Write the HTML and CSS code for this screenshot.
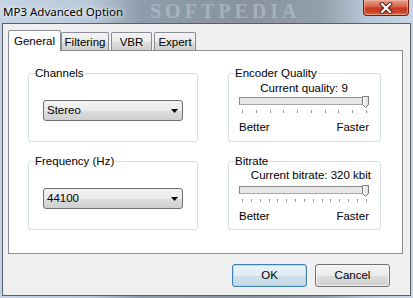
FILE: index.html
```html
<!DOCTYPE html>
<html>
<head>
<meta charset="utf-8">
<link rel="stylesheet" href="styles.css">
</head>
<body>
<div class="titlebar">
  <span class="title">MP3 Advanced Option</span>
  <span class="wm-title">SOFTPEDIA</span>
  <div class="close">
    <svg width="16" height="12" viewBox="0 0 16 12">
      <path d="M4 2 L12 10 M12 2 L4 10" stroke="#4a1a10" stroke-width="4" stroke-linecap="square"/>
      <path d="M4 2 L12 10 M12 2 L4 10" stroke="#ffffff" stroke-width="2.2" stroke-linecap="square"/>
    </svg>
  </div>
</div>
<div class="client">
  <div class="tabs">
    <div class="tab active">General</div>
    <div class="tab t-filter">Filtering</div>
    <div class="tab t-vbr">VBR</div>
    <div class="tab t-expert">Expert</div>
  </div>
  <div class="panel">
    <div class="grid">
      <div class="group">
        <span class="legend">Channels</span>
        <div class="select"><span>Stereo</span>
          <svg class="arrow" width="7" height="4" viewBox="0 0 7 4"><path d="M0 0 H7 L3.5 4 Z" fill="#000"/></svg>
        </div>
      </div>
      <div class="group slider q">
        <span class="legend">Encoder Quality</span>
        <div class="value center">Current quality: 9</div>
        <div class="track"><svg class="thumb" width="7" height="12" viewBox="0 0 7 12"><defs><linearGradient id="tg" x1="0" y1="0" x2="1" y2="0"><stop offset="0" stop-color="#ffffff"/><stop offset="1" stop-color="#d8d8d8"/></linearGradient></defs><path d="M0.5 0.5 H6.5 V8.5 L3.5 11.5 L0.5 8.5 Z" fill="url(#tg)" stroke="#7b7b7b"/></svg></div>
        <div class="ticks">
          <i></i><i></i><i></i><i></i><i></i><i></i><i></i><i></i><i></i><i></i>
        </div>
        <div class="ends"><span>Better</span><span>Faster</span></div>
      </div>
      <div class="group">
        <span class="legend">Frequency (Hz)</span>
        <div class="select"><span>44100</span>
          <svg class="arrow" width="7" height="4" viewBox="0 0 7 4"><path d="M0 0 H7 L3.5 4 Z" fill="#000"/></svg>
        </div>
      </div>
      <div class="group slider b">
        <span class="legend">Bitrate</span>
        <div class="value right">Current bitrate: 320 kbit</div>
        <div class="track"><svg class="thumb" width="7" height="12" viewBox="0 0 7 12"><path d="M0.5 0.5 H6.5 V8.5 L3.5 11.5 L0.5 8.5 Z" fill="url(#tg)" stroke="#7b7b7b"/></svg></div>
        <div class="ticks">
          <i></i><i></i><i></i><i></i><i></i><i></i><i></i><i></i><i></i><i></i><i></i><i></i><i></i><i></i><i></i>
        </div>
        <div class="ends"><span>Better</span><span>Faster</span></div>
      </div>
    </div>
  </div>
  <div class="buttons">
    <div class="btn default">OK</div>
    <div class="btn">Cancel</div>
  </div>
</div>
</body>
</html>
```
FILE: styles.css
```css
* { box-sizing: border-box; }
html, body { margin: 0; padding: 0; }
body {
  width: 413px;
  height: 298px;
  overflow: hidden;
  font-family: "Liberation Sans", Arial, sans-serif;
  font-size: 11.5px;
  color: #000;
  background: linear-gradient(90deg, #c4d4e4 0%, #b9c9d9 22%, #8f9cab 34%, #87939f 60%, #929fac 78%, #b6c5d4 88%, #c9d7e5 100%);
}
.titlebar {
  height: 23px;
  display: flex;
  align-items: flex-start;
  justify-content: space-between;
  position: relative;
}
.title {
  padding: 4px 0 0 3px;
  font-family: "Noto Sans", "Liberation Sans", sans-serif;
  font-size: 11.5px;
  line-height: 15px;
  text-shadow: 0 0 6px rgba(255,255,255,0.9), 0 0 3px rgba(255,255,255,0.8);
  position: relative;
  z-index: 1;
}
.wm-title {
  position: absolute;
  left: 150px;
  top: 0;
  font-family: "Liberation Serif", serif;
  font-weight: bold;
  font-size: 20px;
  line-height: 23px;
  letter-spacing: 4px;
  color: rgba(225,232,240,0.35);
}
.close {
  width: 46px;
  height: 16px;
  margin-right: 4px;
  border: 1px solid #6b2216;
  border-top: none;
  border-radius: 0 0 4px 4px;
  background: linear-gradient(180deg, #e6a291 0%, #d86a52 40%, #c8391e 55%, #c94a2e 85%, #e0826a 100%);
  box-shadow: inset 0 0 0 1px rgba(255,200,180,0.45);
  display: flex;
  align-items: center;
  justify-content: center;
  position: relative;
  z-index: 1;
}
.client {
  margin: 0 2px;
  height: 273px;
  border: 1px solid #56616c;
  background: #f0f0f0;
  padding: 6px 0 0 5px;
}
.tabs {
  display: flex;
  align-items: flex-end;
  height: 20px;
}
.tab {
  height: 18px;
  border: 1px solid #898c95;
  border-bottom: none;
  border-radius: 2px 2px 0 0;
  background: linear-gradient(180deg, #f3f3f3 0%, #ebebeb 50%, #dddddd 51%, #cfcfcf 100%);
  display: flex;
  align-items: center;
  justify-content: center;
  line-height: 14px;
  padding-top: 1px;
  margin-right: 1px;
}
.tab.active {
  width: 53px;
  height: 21px;
  margin-bottom: -1px;
  margin-right: 0;
  background: #fff;
  position: relative;
  z-index: 2;
  padding-top: 0;
  padding-bottom: 1px;
}
.t-filter { width: 48px; }
.t-vbr { width: 41px; margin-left: 1px; }
.t-expert { width: 42px; margin-left: 1px; }
.panel {
  width: 395px;
  height: 204px;
  border: 1px solid #898c95;
  background: #fff;
  padding: 22px 0 0 19px;
  position: relative;
}
.grid {
  display: grid;
  grid-template-columns: 170px 153px;
  grid-template-rows: 69px 69px;
  column-gap: 30px;
  row-gap: 19px;
  position: relative;
}
.group {
  border: 1px solid #d5dfe5;
  border-radius: 3px;
  position: relative;
}
.legend {
  position: absolute;
  top: -8px;
  left: 6px;
  padding: 0 1px 0 0;
  background: #fff;
  line-height: 15px;
}
.select {
  margin: 26px 0 0 14px;
  width: 140px;
  height: 21px;
  border: 1px solid #707070;
  border-radius: 3px;
  background: linear-gradient(180deg, #f2f2f2 0%, #ebebeb 50%, #dddddd 51%, #cfcfcf 100%);
  display: flex;
  align-items: center;
  justify-content: space-between;
  padding: 0 4px 0 3px;
  line-height: 15px;
}
.arrow { display: block; margin-top: 1px; }
.slider { padding: 0 11px 0 10px; }
.value { line-height: 15px; }
.value.center { text-align: center; margin-top: 7px; }
.value.right { text-align: right; margin-top: 6px; margin-right: -2px; }
.track {
  height: 8px;
  border: 1px solid #a8a8a8;
  border-left-color: #888;
  border-top-color: #8a8a8a;
  background: #e7e7e7;
  position: relative;
}
.q .track { margin-top: 1px; }
.b .track { margin-top: 3px; }
.thumb {
  position: absolute;
  right: -1px;
  top: -2px;
}
.ticks {
  display: flex;
  justify-content: space-between;
  margin: 5px 2px 0 3px;
  height: 3px;
}
.ticks i {
  display: block;
  width: 1px;
  height: 3px;
  background: #9a9a9a;
}
.ends {
  display: flex;
  justify-content: space-between;
  margin-top: 7px;
  line-height: 15px;
}
.buttons {
  display: flex;
  justify-content: flex-end;
  gap: 8px;
  margin-top: 10px;
  padding-right: 20px;
}
.btn {
  width: 75px;
  height: 23px;
  border: 1px solid #707070;
  border-radius: 3px;
  background: linear-gradient(180deg, #f2f2f2 0%, #ebebeb 50%, #dddddd 51%, #cfcfcf 100%);
  box-shadow: inset 0 0 0 1px rgba(255,255,255,0.7);
  display: flex;
  align-items: center;
  justify-content: center;
  line-height: 15px;
}
.btn.default {
  border-color: #3c7fb1;
  background: linear-gradient(180deg, #eaf3f8 0%, #e0ecf3 50%, #cfe0ea 51%, #c4d8e4 100%);
  box-shadow: inset 0 0 0 1px rgba(170,220,250,0.9);
}
```
